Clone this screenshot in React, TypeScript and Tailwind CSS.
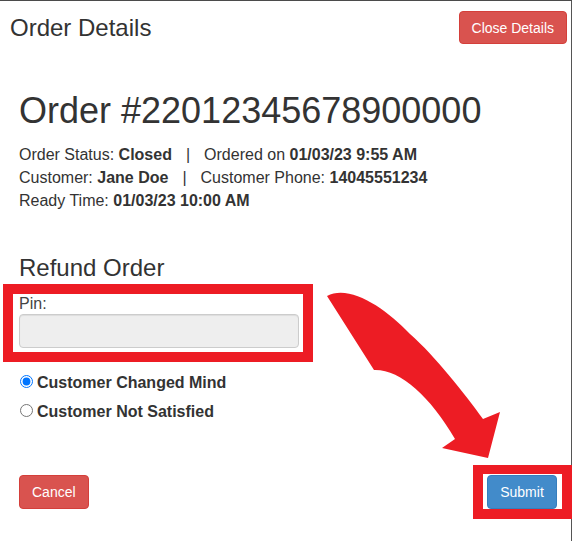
import React from 'react';

export default function App() {
  return (
    <div className="relative w-[572px] h-[541px] overflow-hidden bg-white border-t border-[#4b4b4b] font-['Liberation_Sans',Arial,sans-serif] text-[#333]">
      {/* window edge bits */}
      <div className="absolute left-0 top-[-1px] w-[50px] h-px bg-[#1f3550]" />
      <div className="absolute right-0 top-0 bottom-0 w-px bg-[#555]" />

      {/* header */}
      <div className="flex justify-between items-start pt-[10px] pl-[10px] pr-[5px]">
        <h2 className="text-[24px] leading-[33px]">Order Details</h2>
        <button className="h-[33px] px-[12px] rounded-[4px] bg-[#d9534f] border border-[#d43f3a] text-white text-[14px] leading-[20px]">
          Close Details
        </button>
      </div>

      <div className="px-[19px]">
        <h1 className="mt-[47px] text-[36px] leading-[40px]">Order #22012345678900000</h1>

        <div className="mt-[12px] text-[16px] leading-[23px]">
          <div>
            Order Status: <b>Closed</b>
            <span className="mx-[14px]">|</span>
            Ordered on <b>01/03/23 9:55 AM</b>
          </div>
          <div>
            Customer: <b>Jane Doe</b>
            <span className="mx-[14px]">|</span>
            Customer Phone: <b>14045551234</b>
          </div>
          <div>
            Ready Time: <b>01/03/23 10:00 AM</b>
          </div>
        </div>

        <h3 className="mt-[42px] text-[24px] leading-[27px]">Refund Order</h3>

        {/* highlighted pin field */}
        <div className="mt-[3px] -ml-[16px] w-[310px] border-[10px] border-[#ed1c24] pl-[6px] pr-[4px] pb-[4px]">
          <label className="block text-[16px] leading-[20px] text-[#444]">Pin:</label>
          <input
            type="password"
            disabled
            className="block w-full h-[34px] rounded-[4px] bg-[#eee] border border-[#ccc] shadow-[inset_0_1px_1px_rgba(0,0,0,0.075)]"
          />
        </div>

        <div className="mt-[11px] flex flex-col gap-[9px] text-[16px] leading-[20px] font-bold">
          <label className="flex items-start gap-[4px] ml-[1px]">
            <input type="radio" name="reason" defaultChecked className="m-0 mt-[2px] w-[13px] h-[13px]" />
            Customer Changed Mind
          </label>
          <label className="flex items-start gap-[4px] ml-[1px]">
            <input type="radio" name="reason" className="m-0 mt-[2px] w-[13px] h-[13px]" />
            Customer Not Satisfied
          </label>
        </div>

        <div className="mt-[43px] flex justify-between items-start">
          <button className="mt-[10px] h-[34px] px-[12px] rounded-[4px] bg-[#d9534f] border border-[#d43f3a] text-white text-[14px] leading-[20px]">
            Cancel
          </button>
          <div className="relative z-10 -mr-[19px] border-[#ed1c24] border-l-[10px] border-r-[10px] border-t-[9px] border-b-[10px] bg-white pl-[4px] pr-[5px] pt-[1px]">
            <button className="block h-[34px] w-[70px] rounded-[4px] bg-[#428bca] border border-[#357ebd] text-white text-[14px] leading-[20px]">
              Submit
            </button>
          </div>
        </div>
      </div>

      {/* curved arrow */}
      <svg className="absolute inset-0 pointer-events-none" width="572" height="541" viewBox="0 0 572 541">
        <path
          d="M327 295 C350 283 385 307 410 333 C435 355 465 393 483 418 L500 411 L488 457 L442 447 L455 438 C430 395 400 368 374 369 Z"
          fill="#ed1c24"
        />
      </svg>
    </div>
  );
}
